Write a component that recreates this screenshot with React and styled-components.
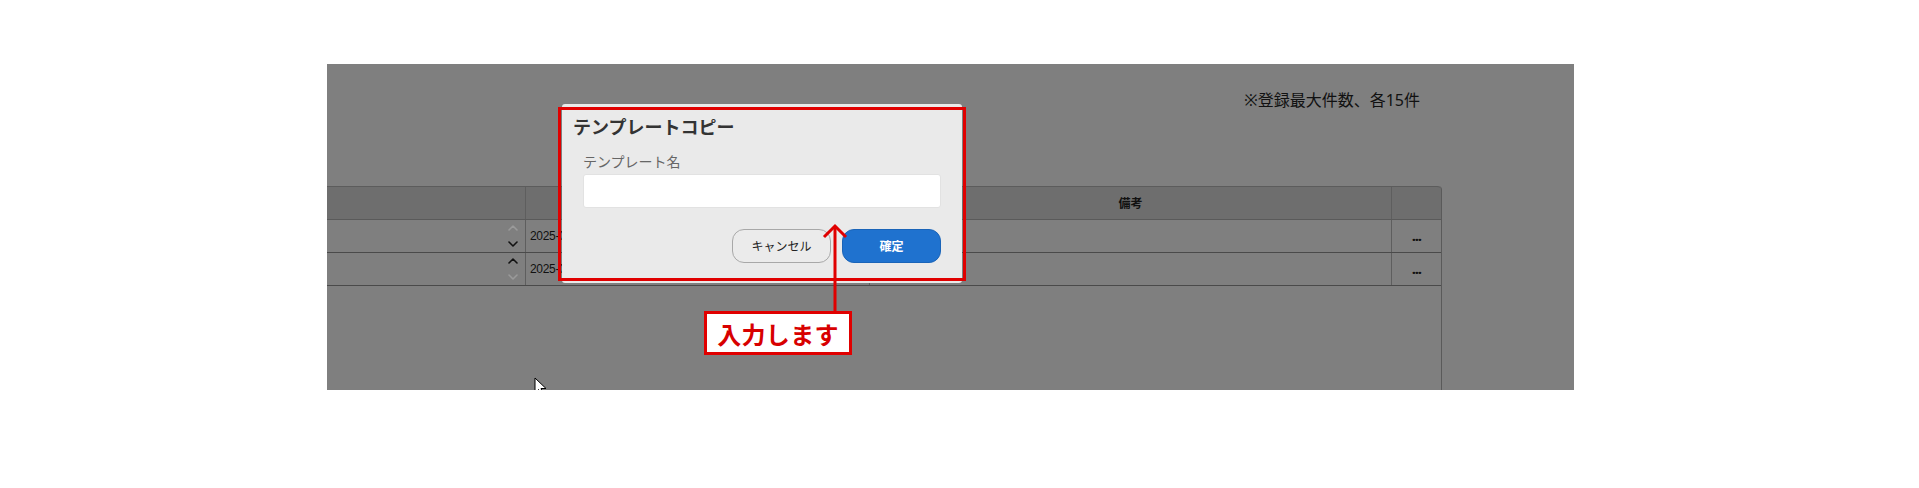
import React from "react";
import styled, { createGlobalStyle } from "styled-components";

const GlobalStyle = createGlobalStyle`
  html, body {
    margin: 0;
    padding: 0;
    background: #ffffff;
  }
  body {
    font-family: "Noto Sans", "Noto Sans CJK JP", sans-serif;
  }
  * {
    box-sizing: border-box;
  }
`;

const Page = styled.div`
  width: 1919px;
  height: 488px;
  padding: 64px 0 0 327px;
`;

/* the dimmed screen area behind the modal */
const Screen = styled.div`
  position: relative;
  width: 1247px;
  height: 326px;
  overflow: hidden;
  background: #7f7f7f;
  display: flex;
  flex-direction: column;
  padding: 24px 132px 0 0;
`;

const Note = styled.div`
  align-self: flex-end;
  margin-right: 22px;
  font-size: 16px;
  line-height: 24px;
  color: #111;
`;

const Table = styled.div`
  flex: 1;
  margin-top: 74px;
  display: flex;
  flex-direction: column;
  border-right: 1px solid #5a5a5a;
  border-top-right-radius: 4px;
  width: 1115px;
`;

const Row = styled.div`
  display: grid;
  grid-template-columns: 199px 344px 522px 49px;
  height: ${(p) => (p.$head ? "34px" : "33px")};
  background: ${(p) => (p.$head ? "#6e6e6e" : "transparent")};
  border-top: ${(p) => (p.$head ? "1px solid #5c5c5c" : "none")};
  border-bottom: 1px solid ${(p) => (p.$head ? "#5a5a5a" : "#4a4a4a")};
  border-top-right-radius: ${(p) => (p.$head ? "4px" : "0")};
`;

const Cell = styled.div`
  display: flex;
  align-items: center;
  justify-content: ${(p) => p.$align || "flex-start"};
  padding: ${(p) => p.$pad || "0"};
  border-right: ${(p) => (p.$last ? "none" : "1px solid #5e5e5e")};
  font-size: 12px;
  font-weight: ${(p) => (p.$bold ? 700 : 400)};
  color: #111;
  white-space: nowrap;
  overflow: hidden;
`;

const DateText = styled.span`
  font-family: "Liberation Sans", "Noto Sans CJK JP", sans-serif;
  font-size: 12px;
  letter-spacing: -0.3px;
`;

const Dots = styled.span`
  font-size: 13px;
  font-weight: 900;
  letter-spacing: -0.8px;
  color: #111;
`;

const Spinner = styled.div`
  display: flex;
  flex-direction: column;
`;

const ChevronBox = styled.div`
  width: 12px;
  height: 16px;
  display: flex;
  align-items: center;
  justify-content: center;
  color: ${(p) => (p.$off ? "#9a9a9a" : "#111")};
`;

function Chevron({ up, off }) {
  return (
    <ChevronBox $off={off}>
      <svg width="10" height="6" viewBox="0 0 10 6">
        <path
          d={up ? "M1 5 L5 1 L9 5" : "M1 1 L5 5 L9 1"}
          fill="none"
          stroke="currentColor"
          strokeWidth="1.6"
          strokeLinecap="round"
          strokeLinejoin="round"
        />
      </svg>
    </ChevronBox>
  );
}

/* modal */
const Modal = styled.div`
  position: absolute;
  left: 235px;
  top: 40px;
  width: 400px;
  height: 179px;
  background: #eaeaea;
  border-radius: 3px;
  padding: 10px 21px 20px 11px;
  display: flex;
  flex-direction: column;
`;

const ModalTitle = styled.h2`
  margin: 0;
  font-size: 18px;
  line-height: 26px;
  font-weight: 700;
  color: #333;
`;

const Field = styled.div`
  margin-top: 12px;
  padding-left: 10px;
  display: flex;
  flex-direction: column;
  gap: 2px;
`;

const Label = styled.label`
  font-size: 14px;
  line-height: 20px;
  color: #666;
`;

const Input = styled.input`
  width: 358px;
  height: 34px;
  border: 1px solid #e2e2e2;
  border-radius: 3px;
  background: #fff;
  outline: none;
`;

const Buttons = styled.div`
  margin-top: 21px;
  display: flex;
  justify-content: flex-end;
  gap: 11px;
`;

const Button = styled.button`
  width: 99px;
  height: 34px;
  border-radius: 12px;
  font-family: "Noto Sans", "Noto Sans CJK JP", sans-serif;
  font-size: 12px;
  cursor: pointer;
  border: 1px solid ${(p) => (p.$primary ? "#1a64b8" : "#a8a8a8")};
  background: ${(p) => (p.$primary ? "#1f72cf" : "#ebebeb")};
  color: ${(p) => (p.$primary ? "#fff" : "#222")};
  font-weight: ${(p) => (p.$primary ? 700 : 400)};
`;

/* annotations drawn over the screenshot */
const Frame = styled.div`
  position: absolute;
  left: 231px;
  top: 43px;
  width: 408px;
  height: 174px;
  border: 3px solid #e00000;
  pointer-events: none;
`;

const ArrowSvg = styled.svg`
  position: absolute;
  left: 493px;
  top: 160px;
  overflow: visible;
`;

const Callout = styled.div`
  position: absolute;
  left: 377px;
  top: 247px;
  width: 148px;
  height: 44px;
  border: 3px solid #e00000;
  background: #fff;
  display: flex;
  align-items: center;
  justify-content: center;
  font-size: 24px;
  font-weight: 700;
  color: #d80000;
  letter-spacing: 0.3px;
`;

const Cursor = styled.svg`
  position: absolute;
  left: 207px;
  top: 313px;
`;

export default function App() {
  return (
    <>
      <GlobalStyle />
      <Page>
        <Screen>
          <Note>※登録最大件数、各15件</Note>
          <Table>
            <Row $head>
              <Cell />
              <Cell />
              <Cell $align="center" $bold>
                備考
              </Cell>
              <Cell $last />
            </Row>
            <Row>
              <Cell $align="flex-end" $pad="0 6px 0 0">
                <Spinner>
                  <Chevron up off />
                  <Chevron />
                </Spinner>
              </Cell>
              <Cell $pad="0 0 0 4px">
                <DateText>2025-04-01 10:00</DateText>
              </Cell>
              <Cell />
              <Cell $align="center" $last>
                <Dots>...</Dots>
              </Cell>
            </Row>
            <Row>
              <Cell $align="flex-end" $pad="0 6px 0 0">
                <Spinner>
                  <Chevron up />
                  <Chevron off />
                </Spinner>
              </Cell>
              <Cell $pad="0 0 0 4px">
                <DateText>2025-04-02 10:00</DateText>
              </Cell>
              <Cell />
              <Cell $align="center" $last>
                <Dots>...</Dots>
              </Cell>
            </Row>
          </Table>

          <Modal>
            <ModalTitle>テンプレートコピー</ModalTitle>
            <Field>
              <Label>テンプレート名</Label>
              <Input type="text" />
            </Field>
            <Buttons>
              <Button>キャンセル</Button>
              <Button $primary>確定</Button>
            </Buttons>
          </Modal>

          <Frame />
          <ArrowSvg width="30" height="88" viewBox="0 0 30 88">
            <path
              d="M15 3 L15 88"
              stroke="#e00000"
              strokeWidth="3"
              fill="none"
            />
            <path
              d="M4 13 L15 2 L26 13"
              stroke="#e00000"
              strokeWidth="3"
              fill="none"
              strokeLinejoin="miter"
            />
          </ArrowSvg>
          <Callout>入力します</Callout>

          <Cursor width="14" height="20" viewBox="0 0 14 20">
            <path
              d="M1 1 L1 16 L4.5 12.5 L7 18.5 L9.5 17.5 L7 11.5 L12 11.5 Z"
              fill="#fff"
              stroke="#000"
              strokeWidth="1"
              strokeLinejoin="round"
            />
          </Cursor>
        </Screen>
      </Page>
    </>
  );
}
